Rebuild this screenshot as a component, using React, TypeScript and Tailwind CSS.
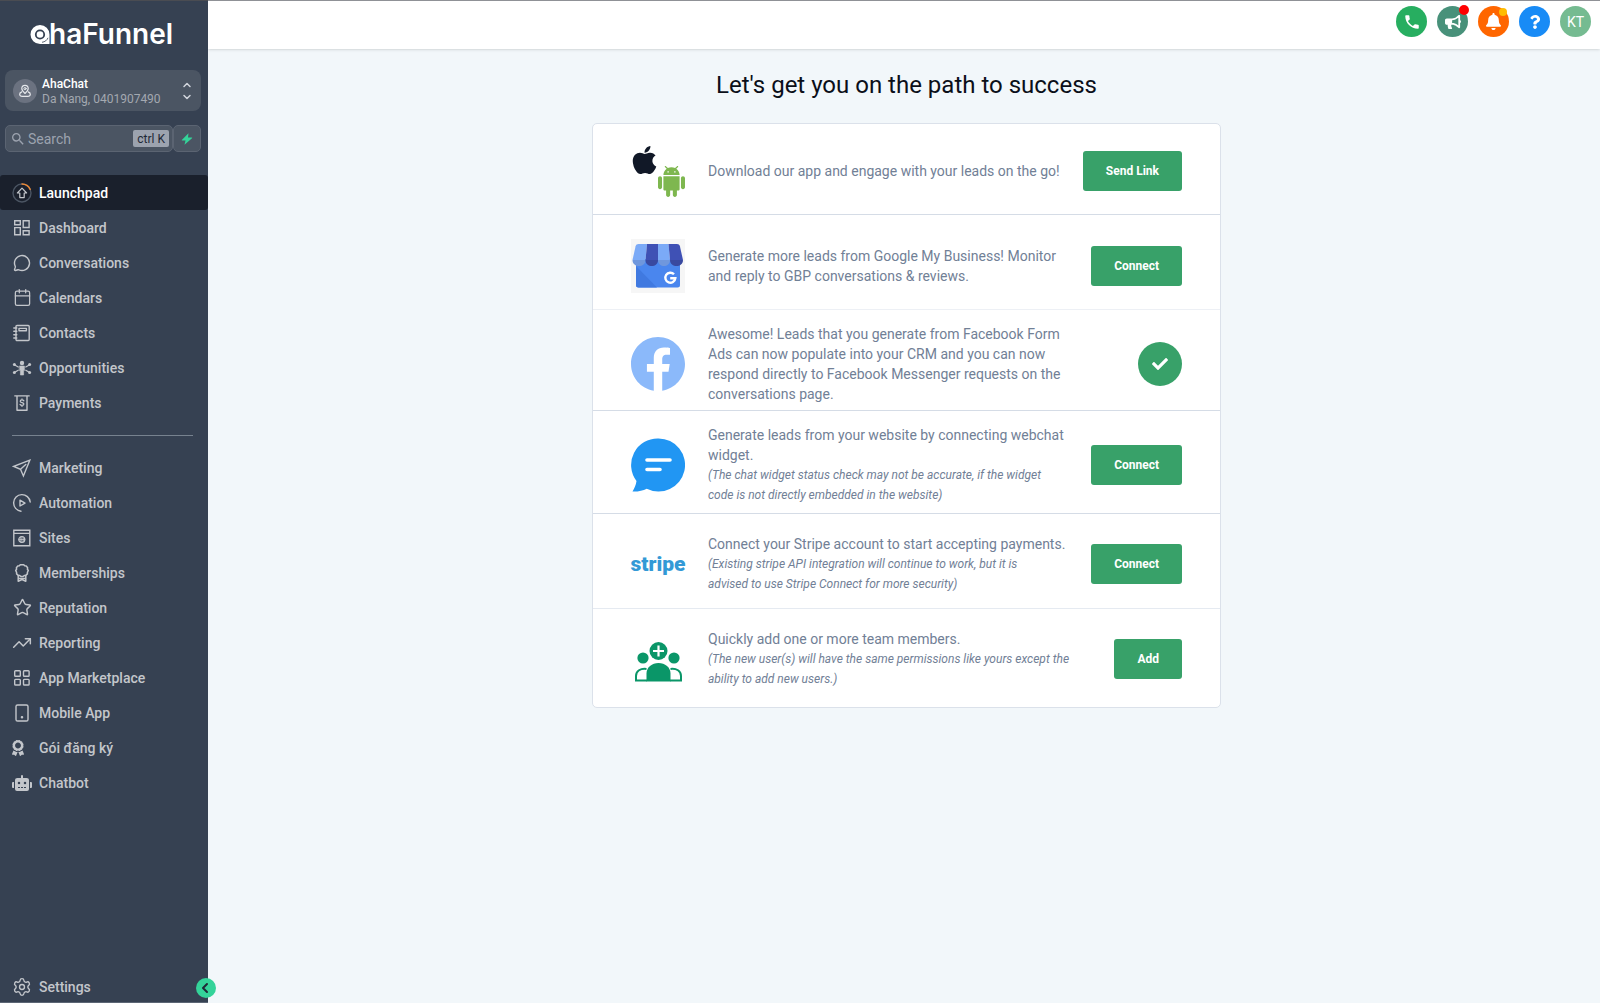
import React, { useState } from "react";
import { FaApple, FaAward, FaBell, FaBullhorn, FaCheck, FaFacebook, FaQuestion, FaRobot } from "react-icons/fa";
import { MdSearch } from "react-icons/md";
import { Calendar, ChevronLeft, ChevronDown, ChevronUp, MessageCircle, Settings, Star, TrendingUp } from "lucide-react";

interface SvgProps {
  className?: string;
  children: React.ReactNode;
}

const LineIcon: React.FC<SvgProps> = ({ className = "size-5", children }) => (
  <svg viewBox="0 0 20 20" fill="none" stroke="currentColor" strokeWidth="1.4" strokeLinecap="round" strokeLinejoin="round" className={className}>
    {children}
  </svg>
);

const LaunchpadIcon = () => (
  <LineIcon>
    <circle cx="10" cy="10" r="9" stroke="#4b5563" />
    <path d="M10 1a9 9 0 0 1 8.2 5.4" stroke="#ed8936" />
    <path d="M10 5.2 14.6 10h-2.4v4.6H7.8V10H5.4z" strokeWidth="1.2" />
  </LineIcon>
);

const DashboardIcon = () => (
  <LineIcon>
    <path d="M2.7 2.7h5.6v4H2.7zM11.2 2.7h5.9v6.8h-5.9zM2.7 9.6h5.6v7.2H2.7zM11.2 12.8h5.9v4h-5.9z" strokeLinejoin="miter" />
  </LineIcon>
);

const ContactsIcon = () => (
  <LineIcon>
    <rect x="4" y="2.5" width="13.2" height="15" rx="1" />
    <path d="M7 5.4h7.4v2.3H7zM1.8 5h3M1.8 8.3h3M1.8 11.7h3M1.8 15h3" />
  </LineIcon>
);

const OpportunitiesIcon = () => (
  <LineIcon>
    <circle cx="10" cy="5" r="2.2" fill="currentColor" stroke="none" />
    <path d="M7.6 8h4.8v4.6h-.8V17H8.4v-4.4h-.8z" fill="currentColor" strokeWidth="0.6" />
    <path d="M6.2 9 2.8 7M6.2 12.2l-3.4 2M13.8 9l3.4-2M13.8 12.2l3.4 2" strokeWidth="1.2" />
    <g fill="currentColor" stroke="none">
      <circle cx="2.4" cy="6.6" r="1.5" />
      <circle cx="2.4" cy="14.6" r="1.5" />
      <circle cx="17.6" cy="6.6" r="1.5" />
      <circle cx="17.6" cy="14.6" r="1.5" />
    </g>
  </LineIcon>
);

const PaymentsIcon = () => (
  <LineIcon>
    <path d="M3 2.9h14M5 3.2v14h10v-14" strokeLinecap="square" />
    <path d="M11.9 7.8c-.4-.6-1-.9-1.9-.9-1 0-1.8.5-1.8 1.3 0 1.9 3.7.9 3.7 2.8 0 .8-.8 1.4-1.9 1.4-.9 0-1.6-.4-2-1M10 5.8v1M10 12.5v1" strokeWidth="1.2" />
  </LineIcon>
);

const MarketingIcon = () => (
  <LineIcon>
    <path d="M17.8 2.2 1.8 8.4l6.7 2.9 2.9 6.7zM8.5 11.3l5.3-4.9" strokeLinejoin="miter" />
  </LineIcon>
);

const AutomationIcon = () => (
  <LineIcon>
    <path d="M9 18.2A8.3 8.3 0 1 1 18.2 9" />
    <path d="M8 7.2v5.8l5-2.9z" />
  </LineIcon>
);

const SitesIcon = () => (
  <LineIcon>
    <path d="M1.8 2.2h16v15.6h-16zM1.8 5.4h16" strokeLinejoin="miter" />
    <circle cx="9.8" cy="11.5" r="3" strokeWidth="1.2" />
    <path d="M9.8 8.5v6M6.8 11.5h6M8.6 9c-.6 1.6-.6 3.4 0 5M11 9c.6 1.6.6 3.4 0 5" strokeWidth="0.8" />
  </LineIcon>
);

const MembershipsIcon = () => (
  <LineIcon>
    <path d="M8.3 1.7h3.4l1 1.1 1.5.1 1.4 1.9-.2 1.4.9 1.3-.9 1.9v1.5l-1.7 1.5-1.5.2-1.1.9H8.9l-1.1-.9-1.5-.2-1.7-1.5V9.4l-.9-1.9.9-1.3-.2-1.4 1.4-1.9 1.5-.1z" strokeWidth="1.5" />
    <path d="M6.2 12.8v5.5l3.8-1.7 3.8 1.7v-5.5M6.4 15.4h7.2" strokeWidth="1.5" />
  </LineIcon>
);

const MarketplaceIcon = () => (
  <LineIcon>
    <rect x="2.7" y="2.7" width="5.6" height="5.6" rx="0.8" />
    <rect x="11.5" y="2.7" width="5.6" height="5.6" rx="0.8" />
    <rect x="2.7" y="11.4" width="5.6" height="5.6" rx="0.8" />
    <rect x="11.5" y="11.4" width="5.6" height="5.6" rx="0.8" />
  </LineIcon>
);

const MobileIcon = () => (
  <LineIcon>
    <rect x="4" y="2" width="12" height="16" rx="1.6" />
    <circle cx="10" cy="14.2" r="0.6" fill="currentColor" />
  </LineIcon>
);

const PinIcon = () => (
  <LineIcon className="size-[14px]">
    <path d="M10 13.5c-2.8-2.6-4.6-4.7-4.6-7a4.6 4.6 0 0 1 9.2 0c0 2.3-1.8 4.4-4.6 7z" strokeWidth="1.7" />
    <circle cx="10" cy="6.6" r="1.6" />
    <path d="M5.4 11.2c-2 .8-3.2 2.2-3 3.8.2 1.9 1.5 2.8 3.6 2.8h8c2.1 0 3.4-.9 3.6-2.8.2-1.6-1-3-3-3.8" strokeWidth="1.7" />
  </LineIcon>
);

const primaryLinks = [
  { name: "Launchpad", icon: <LaunchpadIcon /> },
  { name: "Dashboard", icon: <DashboardIcon /> },
  { name: "Conversations", icon: <MessageCircle size={18} strokeWidth={1.9} /> },
  { name: "Calendars", icon: <Calendar size={19} strokeWidth={1.6} /> },
  { name: "Contacts", icon: <ContactsIcon /> },
  { name: "Opportunities", icon: <OpportunitiesIcon /> },
  { name: "Payments", icon: <PaymentsIcon /> },
];

const secondaryLinks = [
  { name: "Marketing", icon: <MarketingIcon /> },
  { name: "Automation", icon: <AutomationIcon /> },
  { name: "Sites", icon: <SitesIcon /> },
  { name: "Memberships", icon: <MembershipsIcon /> },
  { name: "Reputation", icon: <Star size={19} strokeWidth={1.8} /> },
  { name: "Reporting", icon: <TrendingUp size={20} strokeWidth={1.8} /> },
  { name: "App Marketplace", icon: <MarketplaceIcon /> },
  { name: "Mobile App", icon: <MobileIcon /> },
  { name: "Gói đăng ký", icon: <FaAward size={16} className="mr-auto -ml-0.5" /> },
  { name: "Chatbot", icon: <FaRobot size={20} /> },
];

const Logo = () => (
  <svg viewBox="0 0 148 36" className="h-9 w-[148px]" role="img" aria-label="ahaFunnel">
    <path d="M10 8a9.5 9.5 0 0 1 9.5 9.5V27H10a9.5 9.5 0 0 1 0-19z" fill="#fff" />
    <circle cx="10" cy="17.5" r="4.2" fill="none" stroke="#364152" strokeWidth="1.8" />
    <path d="M12 25.3c3-.5 5-2 6-4.5" fill="none" stroke="#364152" strokeWidth="0.8" />
    <text x="19" y="27" fill="#fff" fontFamily="Inter, sans-serif" fontSize="28" fontWeight="600">haFunnel</text>
  </svg>
);

const MobileStores = () => (
  <div className="flex size-[54px] items-start pt-0.5">
    <FaApple className="-mt-0.5 h-8 w-[27px] shrink-0 text-[#111827]" />
    <svg viewBox="2 0 20 24" preserveAspectRatio="none" className="mt-5 h-[31px] w-[27px] shrink-0" fill="#7eb74f">
      <path d="M6 18c0 .55.45 1 1 1h1v3.5c0 .83.67 1.5 1.5 1.5s1.5-.67 1.5-1.5V19h2v3.5c0 .83.67 1.5 1.5 1.5s1.5-.67 1.5-1.5V19h1c.55 0 1-.45 1-1V8H6v10zM3.5 8C2.67 8 2 8.67 2 9.5v7c0 .83.67 1.5 1.5 1.5S5 17.33 5 16.5v-7C5 8.67 4.33 8 3.5 8zm17 0c-.83 0-1.5.67-1.5 1.5v7c0 .83.67 1.5 1.5 1.5s1.5-.67 1.5-1.5v-7c0-.83-.67-1.5-1.5-1.5zm-4.97-5.84l1.3-1.3c.2-.2.2-.51 0-.71-.2-.2-.51-.2-.71 0l-1.48 1.48C13.85 1.23 12.95 1 12 1c-.96 0-1.86.23-2.66.63L7.85.15c-.2-.2-.51-.2-.71 0-.2.2-.2.51 0 .71l1.31 1.31C6.97 3.26 6 5.01 6 7h12c0-1.99-.97-3.75-2.47-4.84zM10 5H9V4h1v1zm5 0h-1V4h1v1z" />
    </svg>
  </div>
);

const GoogleBusiness = () => (
  <svg viewBox="0 0 54 54" className="size-[54px]">
    <rect width="54" height="54" fill="#f6f6f6" />
    <path d="M5 20h44v26a2.5 2.5 0 0 1-2.5 2.5h-39A2.5 2.5 0 0 1 5 46z" fill="#4a86ee" />
    <path d="M5 27 26 48.5H7.5A2.5 2.5 0 0 1 5 46z" fill="#4079e0" />
    <path d="M7.500 5H16l-1.500 16h-13L4.600 7.200C5 5.800 6 5 7.500 5z" fill="#7baaf7" />
    <path d="M16 5h11v16H14.500z" fill="#3f51b5" />
    <path d="M27 5h10.500L39 21H27z" fill="#7baaf7" />
    <path d="M37.500 5H46c1.500 0 2.500.8 2.900 2.200L52 21H39z" fill="#3f51b5" />
    <path d="M1.500 21h13c0 8-13 8-13 0z" fill="#6f97dd" />
    <path d="M14.500 21H27c0 8-12.500 8-12.500 0z" fill="#3949a0" />
    <path d="M27 21h12c0 8-12 8-12 0z" fill="#6f97dd" />
    <path d="M39 21h13c0 8-13 8-13 0z" fill="#3949a0" />
    <path d="M43 35.300a5 5 0 1 0 1.300 4H39.200" fill="none" stroke="#fff" strokeWidth="2.400" />
  </svg>
);

const ChatBubble = () => (
  <svg viewBox="0 0 54 54" className="size-[54px]">
    <path d="M27.5.5a26.5 26.5 0 1 1-11.800 50.200C12 52.700 7 53.700 1.500 53.500c2-3.200 3.400-6.500 4-10.500A26.500 26.500 0 0 1 27.500.5z" fill="#2196f3" />
    <path d="M16 22h23M16 31.500h13" stroke="#fff" strokeWidth="3.6" strokeLinecap="round" />
  </svg>
);

const StripeLogo = () => (
  <svg viewBox="0 0 54 54" className="size-[54px] overflow-visible" role="img" aria-label="stripe">
    <text x="27" y="34" textAnchor="middle" fill="#3399d6" fontFamily="Roboto, sans-serif" fontSize="21" fontWeight="900">stripe</text>
  </svg>
);

const TeamIcon = () => (
  <svg viewBox="0 0 54 54" className="size-[54px]" fill="#0a9668">
    <circle cx="27.5" cy="19" r="9" />
    <path d="M27.5 13.5v11M22 19h11" stroke="#fff" strokeWidth="2.2" />
    <circle cx="12" cy="26" r="5.6" />
    <circle cx="43" cy="26" r="5.6" />
    <path d="M15.5 49.5v-8a12 10.500 0 0 1 24 0v8z" />
    <path d="M15.500 36.900C9.500 36.100 5 39 5 44v4.500h11M39.500 36.900c6-.8 10.500 2.100 10.500 7.100v4.500H39" fill="none" stroke="#0a9668" strokeWidth="2" />
  </svg>
);

const steps = [
  {
    icon: <MobileStores />,
    text: "Download our app and engage with your leads on the go!",
    action: "Send Link",
    rowClass: "pt-5 pb-4 border-[#d5dce6]",
  },
  {
    icon: <GoogleBusiness />,
    text: "Generate more leads from Google My Business! Monitor and reply to GBP conversations & reviews.",
    action: "Connect",
    rowClass: "pt-6 pb-4 border-[#edf0f5]",
  },
  {
    icon: <FaFacebook viewBox="8 8 496 496" className="size-[54px] text-[#8bb9fa]" />,
    text: "Awesome! Leads that you generate from Facebook Form Ads can now populate into your CRM and you can now respond directly to Facebook Messenger requests on the conversations page.",
    rowClass: "pt-[14px] pb-1.5 border-[#d5dce6]",
  },
  {
    icon: <ChatBubble />,
    text: "Generate leads from your website by connecting webchat widget.",
    note: "(The chat widget status check may not be accurate, if the widget code is not directly embedded in the website)",
    noteClass: "max-w-[340px]",
    action: "Connect",
    rowClass: "pt-[14px] pb-2 border-[#d5dce6]",
  },
  {
    icon: <StripeLogo />,
    text: "Connect your Stripe account to start accepting payments.",
    note: "(Existing stripe API integration will continue to work, but it is advised to use Stripe Connect for more security)",
    noteClass: "max-w-[340px]",
    action: "Connect",
    rowClass: "pt-5 pb-[14px] border-[#e5eaf1]",
  },
  {
    icon: <TeamIcon />,
    text: "Quickly add one or more team members.",
    note: "(The new user(s) will have the same permissions like yours except the ability to add new users.)",
    noteClass: "max-w-[362px]",
    action: "Add",
    rowClass: "pt-5 pb-[18px] border-[#e5eaf1]",
  },
];

interface NavItemProps {
  name: string;
  icon: React.ReactNode;
  active?: boolean;
  className?: string;
  onClick?: () => void;
}

const NavItem: React.FC<NavItemProps> = ({ name, icon, active = false, className = "h-[35px]", onClick }) => (
  <a
    href="#"
    onClick={onClick}
    className={`flex items-center gap-[7px] rounded-[3px] pl-3 text-sm font-medium ${className} ${active ? "bg-[#1a202c] text-white" : "text-[#c3c6cb]"}`}
  >
    <span className={`flex w-5 shrink-0 items-center justify-center ${active ? "text-[#c3c6cb]" : ""}`}>{icon}</span>
    <span>{name}</span>
  </a>
);

const SideBar = () => {
  const [activeLink, setActiveLink] = useState("Launchpad");

  return (
    <aside className="relative flex w-52 shrink-0 flex-col border-t border-b border-t-[#4a4c52] border-b-[#5c6675] bg-[#364152]">
      <div className="flex justify-center pt-4">
        <Logo />
      </div>

      <button className="mt-[17px] mr-[7px] ml-[5px] flex h-[41px] items-center rounded-lg bg-[#4b5563] px-2 text-left">
        <span className="flex size-6 items-center justify-center rounded-full bg-[#6b7280] text-gray-200">
          <PinIcon />
        </span>
        <span className="ml-[5px] flex flex-1 flex-col pt-px">
          <span className="text-xs leading-[15px] font-medium text-white">AhaChat</span>
          <span className="text-xs leading-[14px] text-[#a3a8b0]">Da Nang, 0401907490</span>
        </span>
        <span className="flex flex-col text-gray-300">
          <ChevronUp size={12} strokeWidth={3} />
          <ChevronDown size={12} strokeWidth={3} />
        </span>
      </button>

      <div className="mt-[14px] mr-[7px] ml-[5px] flex h-[27px]">
        <label className="flex min-w-0 flex-1 items-center rounded-[5px] border border-[#5b6472] bg-[#4b5563] pr-[3px] pl-1">
          <MdSearch size={16} className="shrink-0 text-[#9ca3af]" />
          <input type="text" aria-label="Search" placeholder="Search" className="ml-0.5 min-w-0 flex-1 bg-transparent text-sm text-white outline-none placeholder:text-[#9ca3af]" />
          <kbd className="flex h-[17px] items-center rounded-[2px] bg-[#9ca3af] px-1 font-[Roboto] text-xs text-[#1f2937]">ctrl K</kbd>
        </label>
        <button aria-label="Quick actions" className="flex w-7 items-center justify-center rounded-[5px] border border-[#5b6472] bg-[#4b5563] text-[#34d399]">
          <svg viewBox="0 0 12 12" className="size-3" fill="currentColor">
            <path d="M7.500.3 1 6.700c-.4.400-.2.800.3.800h3.200l-1 4.200L11 5.300c.4-.4.200-.8-.3-.8H7z" />
          </svg>
        </button>
      </div>

      <nav className="mt-[23px] flex flex-1 flex-col">
        {primaryLinks.map((n) => (
          <NavItem key={n.name} name={n.name} icon={n.icon} active={activeLink === n.name} onClick={() => setActiveLink(n.name)} />
        ))}
        <hr className="mt-[15px] mr-[15px] mb-[14px] ml-3 border-[#77828f]" />
        {secondaryLinks.map((n) => (
          <NavItem key={n.name} name={n.name} icon={n.icon} active={activeLink === n.name} onClick={() => setActiveLink(n.name)} />
        ))}
        <NavItem name="Settings" icon={<Settings size={20} strokeWidth={1.6} />} className="mt-auto h-[31px]" />
      </nav>

      <button aria-label="Collapse sidebar" className="absolute -right-2 bottom-1 flex size-5 items-center justify-center rounded-full bg-[#34d399] text-[#1f2937]">
        <ChevronLeft size={16} strokeWidth={3} className="-ml-0.5" />
      </button>
    </aside>
  );
};

const TopBar = () => (
  <header className="flex h-[49px] items-start justify-end gap-[10px] border-t border-[#8f9196] bg-white pt-[5px] pr-[9px] text-white shadow">
    <button aria-label="Call" className="flex size-[31px] items-center justify-center rounded-full bg-[#27ae60]">
      <svg viewBox="0 0 24 24" className="size-[18px]" fill="currentColor">
        <path d="M6.600 10.800c1.400 2.800 3.800 5.100 6.600 6.600l2.200-2.200c.3-.3.7-.4 1-.2 1.100.4 2.300.6 3.600.6.600 0 1 .4 1 1V20c0 .6-.4 1-1 1C10.600 21 3 13.400 3 4c0-.6.4-1 1-1h3.500c.6 0 1 .4 1 1 0 1.300.2 2.500.6 3.600.1.300 0 .7-.2 1z" />
      </svg>
    </button>
    <button aria-label="Announcements" className="relative flex size-[31px] items-center justify-center rounded-full bg-[#48917a]">
      <FaBullhorn size={16} />
      <span className="absolute -top-px -right-px size-[10px] rounded-full bg-[#ff0000]" />
    </button>
    <button aria-label="Notifications" className="relative flex size-[31px] items-center justify-center rounded-full bg-[#ff6600]">
      <FaBell size={17} />
      <span className="absolute top-0.5 right-0.5 size-2 rounded-full bg-[#ffbc00]" />
    </button>
    <button aria-label="Help" className="flex size-[31px] items-center justify-center rounded-full bg-[#188bf6]">
      <FaQuestion size={14} />
    </button>
    <button className="flex size-[31px] items-center justify-center rounded-full bg-[#75bb91] text-sm">KT</button>
  </header>
);

export default function App() {
  return (
    <div className="flex min-h-screen bg-[#f2f7fa] font-[Roboto,'Liberation_Sans',sans-serif]">
      <SideBar />
      <div className="min-w-0 flex-1">
        <TopBar />
        <main className="flex flex-col items-center pt-[18px] pl-[5px]">
          <h1 className="text-2xl leading-9 text-[#0b0f19]">Let's get you on the path to success</h1>
          <section className="mt-5 w-full max-w-[629px] rounded-[5px] border border-[#dbe1ea] bg-white">
            {steps.map((s, i) => (
              <div key={s.text} className={`flex items-center px-[38px] ${i < steps.length - 1 ? "border-b" : ""} ${s.rowClass}`}>
                <div className="shrink-0">{s.icon}</div>
                <div className="ml-[23px] max-w-[362px] text-[#718096]">
                  <p className="text-sm leading-5">{s.text}</p>
                  {s.note && <p className={`text-xs leading-5 italic ${s.noteClass}`}>{s.note}</p>}
                </div>
                {s.action ? (
                  <button className="ml-auto h-10 shrink-0 rounded-[3px] bg-[#38a169] px-[23px] text-xs font-bold text-white">{s.action}</button>
                ) : (
                  <span className="ml-auto flex size-11 shrink-0 items-center justify-center rounded-full bg-[#38a169] text-white">
                    <FaCheck size={16} />
                  </span>
                )}
              </div>
            ))}
          </section>
        </main>
      </div>
    </div>
  );
}
